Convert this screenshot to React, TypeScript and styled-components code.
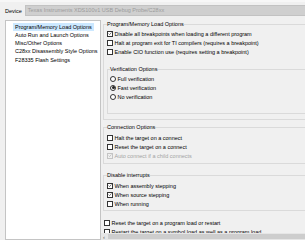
import React, { FunctionComponent } from 'react'
import styled, { createGlobalStyle } from 'styled-components'

const GlobalStyle = createGlobalStyle`
  html, body {
    margin: 0;
    padding: 0;
    background: #f0f0f0;
  }
  body {
    width: 305px;
    height: 240px;
    overflow: hidden;
    font-family: 'Liberation Sans', Arial, sans-serif;
    font-size: 5.5px;
    color: #000;
  }
`

const Page = styled.div`
  display: flex;
  flex-direction: column;
  width: 305px;
  height: 240px;
  box-sizing: border-box;
  border-top: 2px solid #f7f7f7;
`

const DeviceRow = styled.div`
  display: flex;
  align-items: center;
  gap: 3px;
  height: 11px;
  margin-top: 3px;
  padding-left: 5px;
`

const DeviceLabel = styled.span`
  white-space: nowrap;
`

const Combo = styled.div`
  flex: 1;
  height: 11px;
  line-height: 9px;
  box-sizing: border-box;
  margin-right: -2px;
  padding-left: 2px;
  background: #cfcfcf;
  border: 1px solid #c2c2c2;
  color: #9c9c9c;
  white-space: nowrap;
  overflow: hidden;
`

const Body = styled.div`
  display: flex;
  flex: 1;
  min-height: 0;
  margin-top: 4px;
  padding-left: 5px;
`

const Tree = styled.div`
  width: 96px;
  height: 220px;
  box-sizing: border-box;
  padding-top: 1.5px;
  background: #fff;
  border: 1px solid #c4c4c4;
`

const TreeItem = styled.div<{ selected?: boolean }>`
  width: fit-content;
  height: 8.3px;
  line-height: 8.3px;
  margin-left: 7px;
  padding: 0 2px;
  white-space: nowrap;
  background: ${p => (p.selected ? '#cce8ff' : 'transparent')};
`

const Panel = styled.div`
  display: flex;
  flex-direction: column;
  flex: 1;
  min-width: 0;
`

const Scroller = styled.div`
  flex: 1;
  min-height: 0;
  overflow: hidden;
  padding-left: 2px;
`

const Group = styled.fieldset<{ inner?: boolean; mt?: number; pb?: number }>`
  width: ${p => (p.inner ? '260px' : '280px')};
  margin: ${p => p.mt || 0}px 0 0 0;
  padding: 0 0 ${p => (p.pb === undefined ? 5 : p.pb)}px ${p => (p.inner ? '2px' : '3px')};
  border: 1px solid #dadada;
`

const Legend = styled.legend`
  padding: 0;
  line-height: 9px;
  white-space: nowrap;
`

const Rows = styled.div<{ top?: number; bottom?: number }>`
  padding-top: ${p => p.top || 0}px;
  padding-bottom: ${p => p.bottom || 0}px;
`

const Row = styled.div<{ disabled?: boolean }>`
  display: flex;
  align-items: center;
  gap: 1.5px;
  height: 9px;
  white-space: nowrap;
  color: ${p => (p.disabled ? '#a3a3a3' : '#000')};
`

const Box = styled.span<{ disabled?: boolean }>`
  display: flex;
  align-items: center;
  justify-content: center;
  width: 6px;
  height: 6px;
  box-sizing: border-box;
  flex-shrink: 0;
  background: ${p => (p.disabled ? '#f0f0f0' : '#fff')};
  border: 1px solid ${p => (p.disabled ? '#c4c4c4' : '#333')};
`

const Circle = styled.span`
  display: flex;
  align-items: center;
  justify-content: center;
  width: 6px;
  height: 6px;
  box-sizing: border-box;
  flex-shrink: 0;
  border-radius: 50%;
  background: #fff;
  border: 1px solid #333;
`

const Dot = styled.span`
  width: 3px;
  height: 3px;
  border-radius: 50%;
  background: #222;
`

const Loose = styled.div`
  margin-top: 7px;
  padding-left: 1px;
`

const HScroll = styled.div`
  display: flex;
  align-items: center;
  height: 7px;
  background: #e6e6e6;
`

const Arrow = styled.span`
  display: flex;
  align-items: center;
  justify-content: center;
  width: 6px;
  font-size: 6px;
  color: #606060;
`

const Thumb = styled.span`
  flex: 1;
  height: 5px;
  margin-left: 1px;
  background: #cdcdcd;
`

const Check: FunctionComponent<{ checked?: boolean; disabled?: boolean; label: string }> = ({
  checked,
  disabled,
  label,
}) => (
  <Row disabled={disabled}>
    <Box disabled={disabled}>
      {checked ? (
        <svg width="5" height="5" viewBox="0 0 10 10">
          <path
            d="M1.5 5.2 L4 7.7 L8.6 2.4"
            fill="none"
            stroke={disabled ? '#a8a8a8' : '#222'}
            strokeWidth="1.5"
          />
        </svg>
      ) : null}
    </Box>
    {label}
  </Row>
)

const Radio: FunctionComponent<{ selected?: boolean; label: string }> = ({ selected, label }) => (
  <Row>
    <Circle>{selected ? <Dot /> : null}</Circle>
    {label}
  </Row>
)

const pages = [
  'Program/Memory Load Options',
  'Auto Run and Launch Options',
  'Misc/Other Options',
  'C28xx Disassembly Style Options',
  'F28335 Flash Settings',
]

const App: FunctionComponent = () => (
  <>
    <GlobalStyle />
    <Page>
      <DeviceRow>
        <DeviceLabel>Device</DeviceLabel>
        <Combo>Texas Instruments XDS100v1 USB Debug Probe/C28xx</Combo>
      </DeviceRow>
      <Body>
        <Tree>
          {pages.map((name, i) => (
            <TreeItem key={name} selected={i === 0}>
              {name}
            </TreeItem>
          ))}
        </Tree>
        <Panel>
          <Scroller>
            <Group>
              <Legend>Program/Memory Load Options</Legend>
              <Check checked label="Disable all breakpoints when loading a different program" />
              <Check label="Halt at program exit for TI compilers (requires a breakpoint)" />
              <Check label="Enable CIO function use (requires setting a breakpoint)" />
              <Group inner mt={9}>
                <Legend>Verification Options</Legend>
                <Rows bottom={7}>
                  <Radio label="Full verification" />
                  <Radio selected label="Fast verification" />
                  <Radio label="No verification" />
                </Rows>
              </Group>
            </Group>
            <Group mt={3} pb={3}>
              <Legend>Connection Options</Legend>
              <Rows top={1}>
                <Check label="Halt the target on a connect" />
                <Check label="Reset the target on a connect" />
                <Check checked disabled label="Auto connect if a child connects" />
              </Rows>
            </Group>
            <Group mt={7} pb={2}>
              <Legend>Disable interrupts</Legend>
              <Rows top={1}>
                <Check checked label="When assembly stepping" />
                <Check checked label="When source stepping" />
                <Check label="When running" />
              </Rows>
            </Group>
            <Loose>
              <Check label="Reset the target on a program load or restart" />
              <Check label="Restart the target on a symbol load as well as a program load" />
            </Loose>
          </Scroller>
          <HScroll>
            <Arrow>‹</Arrow>
            <Thumb />
          </HScroll>
        </Panel>
      </Body>
    </Page>
  </>
)

export default App
